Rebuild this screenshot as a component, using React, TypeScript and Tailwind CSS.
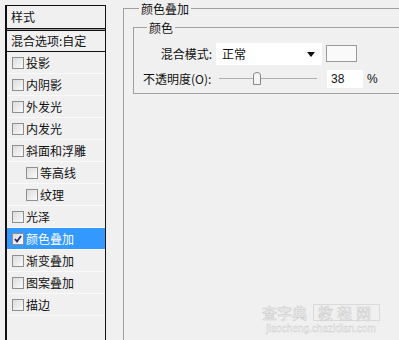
import React from "react";

const F = { fontFamily: '"Noto Sans CJK SC", "Noto Sans", sans-serif' };

function Box({ checked }: { checked?: boolean }) {
  return (
    <div className="w-[12px] h-[12px] border border-[#8e8f8f] bg-gradient-to-br from-[#dcdcdc] to-[#fafafa] flex items-center justify-center shrink-0">
      {checked && (
        <svg width="10" height="10" viewBox="0 0 10 10">
          <path d="M2 5 L4 7.5 L8 2" stroke="#2a2a6a" strokeWidth="1.8" fill="none" />
        </svg>
      )}
    </div>
  );
}

const rows: { t: string; indent?: boolean; sel?: boolean }[] = [
  { t: "投影" },
  { t: "内阴影" },
  { t: "外发光" },
  { t: "内发光" },
  { t: "斜面和浮雕" },
  { t: "等高线", indent: true },
  { t: "纹理", indent: true },
  { t: "光泽" },
  { t: "颜色叠加", sel: true },
  { t: "渐变叠加" },
  { t: "图案叠加" },
  { t: "描边" },
];

export default function App() {
  return (
    <div className="relative w-[399px] h-[340px] overflow-hidden bg-[#f0f0f0] flex text-[12px] text-[#111]" style={F}>
      {/* left panel */}
      <div className="ml-[5px] mt-[5px] w-[101px] h-[340px] border-l-2 border-r border-t border-[#111] flex flex-col">
        <div className="h-[22px] flex items-center pl-[4px] leading-none">样式</div>
        <div className="h-px bg-[#111]" />
        <div className="h-px bg-[#9a9a9a]" />
        <div className="h-px bg-[#111]" />
        <div className="h-[20px] flex items-center pl-[4px] leading-none">混合选项:自定</div>
        <div className="h-px bg-[#111]" />
        {rows.map((r) => (
          <div
            key={r.t}
            className={
              "h-[22px] flex items-center gap-[2px] border-b border-[#f9f9f9] leading-none " +
              (r.sel ? "bg-[#3399ff] text-white" : "") +
              (r.indent ? " pl-[19px]" : " pl-[5px]")
            }
          >
            <Box checked={r.sel} />
            <span>{r.t}</span>
          </div>
        ))}
      </div>

      {/* right side */}
      <div className="relative ml-[17px] mt-[8px] flex-1 h-[340px] border-l border-t border-[#a0a0a0]">
        <div className="absolute -top-[8px] left-[15px] px-[2px] bg-[#f0f0f0] leading-[16px]">颜色叠加</div>
        <div className="relative ml-[9px] mt-[18px] h-[67px] border-l border-t border-b border-[#a0a0a0] -mr-[2px] flex flex-col">
          <div className="absolute -top-[8px] left-[13px] px-[2px] bg-[#f0f0f0] leading-[16px]">颜色</div>
          <div className="flex items-center mt-[15px] h-[22px]">
            <div className="w-[82px] text-right pr-[4px] leading-none">混合模式:</div>
            <div className="w-[106px] h-[22px] bg-white flex items-center justify-between pl-[6px] pr-[7px] leading-none">
              <span>正常</span>
              <svg width="8" height="5" viewBox="0 0 8 5">
                <path d="M0 0 H8 L4 5 Z" fill="#111" />
              </svg>
            </div>
            <div className="ml-[4px] self-start mt-[2px] w-[31px] h-[17px] border border-[#9a9a9a] bg-[#fafafa]" />
          </div>
          <div className="flex items-center mt-[3px] h-[21px]">
            <div className="w-[82px] pl-[9px] leading-none whitespace-nowrap">不透明度(O):</div>
            <div className="relative w-[98px] h-[21px] ml-[3px] flex items-center">
              <div className="w-full h-px bg-[#b0b0b0]" />
              <svg className="absolute left-[34px] top-[4px]" width="8" height="13" viewBox="0 0 8 13">
                <path d="M0.5 12.5 V3 Q0.5 0.5 4 0.5 Q7.5 0.5 7.5 3 V12.5 Z" fill="#f4f4f4" stroke="#8a8a8a" />
              </svg>
            </div>
            <div className="ml-[10px] w-[36px] h-[18px] bg-white flex items-center pl-[4px] leading-none" style={{ fontFamily: '"Liberation Sans", Arial, sans-serif' }}>38</div>
            <div className="ml-[4px] leading-none" style={{ fontFamily: '"Liberation Sans", Arial, sans-serif' }}>%</div>
          </div>
        </div>
      </div>

      {/* watermark */}
      <div className="absolute left-[262px] top-[304px] flex flex-col items-center text-white opacity-90 pointer-events-none">
        <div className="flex items-center gap-[6px] text-[15px] leading-none" style={{ WebkitTextStroke: "0.6px #c8c8c8" }}>
          <span>查字典</span>
          <span className="px-[4px] border border-[#d8d8d8] tracking-[4px]">教程网</span>
        </div>
        <div className="text-[10px] leading-none mt-[3px]" style={{ fontFamily: '"Liberation Sans", Arial, sans-serif', WebkitTextStroke: "0.4px #c8c8c8" }}>
          jiaocheng.chazidian.com
        </div>
      </div>
    </div>
  );
}
